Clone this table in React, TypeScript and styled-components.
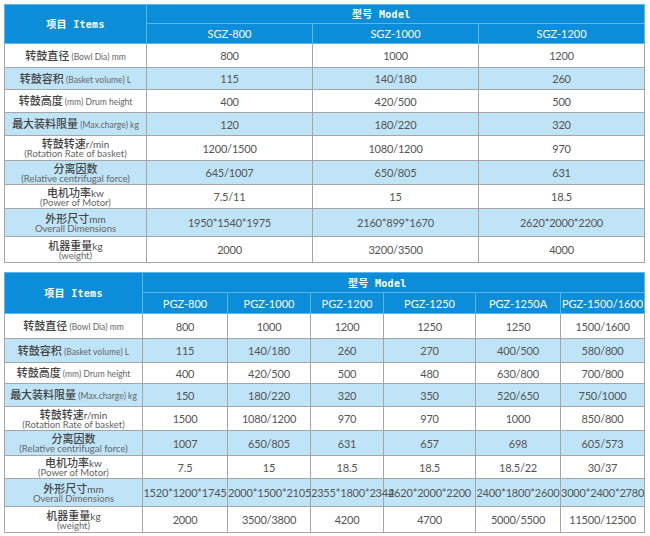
import React from "react";
import styled, { createGlobalStyle } from "styled-components";

const Global = createGlobalStyle`
  html, body { margin: 0; padding: 0; background: #fff; }
  body { font-family: "Lato", "Noto Sans CJK SC", sans-serif; }
`;

const Page = styled.div`
  padding: 4px 0 0 4px;
  display: flex;
  flex-direction: column;
  gap: 9px;
  width: 640px;
`;

const Table = styled.table`
  width: 640px;
  border-collapse: collapse;
  table-layout: fixed;
`;

const HeadCell = styled.th<{ $left?: boolean }>`
  background: #0b8dd9;
  color: #fff;
  font-weight: 400;
  font-size: 11px;
  font-family: "Lato", "Noto Sans CJK SC", sans-serif;
  border: 1px solid #5cb6ea;
  text-align: ${(p) => (p.$left ? "left" : "center")};
  padding: 0;
  padding-left: ${(p) => (p.$left ? "205px" : "0")};
  white-space: nowrap;
  overflow: visible;
  line-height: 1;
`;

const Mono = styled.span`
  font-family: "DejaVu Sans Mono", "Noto Sans CJK SC", monospace;
  font-weight: 700;
  font-size: 10px;
  letter-spacing: 0.3px;
`;

const Row = styled.tr<{ $alt: boolean; $h: number }>`
  height: ${(p) => p.$h}px;
  background: ${(p) => (p.$alt ? "#bfe4f8" : "#ffffff")};
`;

const Cell = styled.td`
  border: 1px solid #a5a5a5;
  text-align: center;
  color: #555;
  font-size: 11px;
  letter-spacing: -0.2px;
  padding: 0;
  white-space: nowrap;
  overflow: visible;
  line-height: 1;
`;

const LabelCell = styled(Cell)`
  letter-spacing: 0;
`;

const Line = styled.div`
  height: 12px;
  line-height: 12px;
`;

const Cn = styled.span`
  font-family: "Noto Sans CJK SC", sans-serif;
  font-weight: 500;
  font-size: 11px;
  color: #444;
`;

const Unit = styled.span`
  font-family: "Lato", sans-serif;
  font-size: 10px;
  color: #555;
`;

const Small = styled.span`
  font-family: "Lato", sans-serif;
  font-size: 8.5px;
  color: #666;
`;

const Sub = styled.div`
  font-family: "Lato", sans-serif;
  font-size: 9.5px;
  color: #666;
  height: 10px;
  line-height: 10px;
`;

type Label = { cn: string; unit?: string; inline?: string; sub?: string };

const labels: Label[] = [
  { cn: "转鼓直径", inline: " (Bowl Dia) mm" },
  { cn: "转鼓容积", inline: " (Basket volume) L" },
  { cn: "转鼓高度", inline: " (mm) Drum height" },
  { cn: "最大装料限量", inline: " (Max.charge) kg" },
  { cn: "转鼓转速", unit: "r/min", sub: "(Rotation Rate of basket)" },
  { cn: "分离因数", sub: "(Relative centrifugal force)" },
  { cn: "电机功率", unit: "kw", sub: "(Power of Motor)" },
  { cn: "外形尺寸", unit: "mm", sub: "Overall Dimensions" },
  { cn: "机器重量", unit: "kg", sub: "(weight)" },
];

const heights1 = [24, 22, 23, 23, 25, 24, 24, 28, 26];
const heights2 = [25, 24, 21, 23, 24, 25, 23, 28, 26];

const t1Models = ["SGZ-800", "SGZ-1000", "SGZ-1200"];
const t1Data = [
  ["800", "1000", "1200"],
  ["115", "140/180", "260"],
  ["400", "420/500", "500"],
  ["120", "180/220", "320"],
  ["1200/1500", "1080/1200", "970"],
  ["645/1007", "650/805", "631"],
  ["7.5/11", "15", "18.5"],
  ["1950*1540*1975", "2160*899*1670", "2620*2000*2200"],
  ["2000", "3200/3500", "4000"],
];

const t2Models = ["PGZ-800", "PGZ-1000", "PGZ-1200", "PGZ-1250", "PGZ-1250A", "PGZ-1500/1600"];
const t2Data = [
  ["800", "1000", "1200", "1250", "1250", "1500/1600"],
  ["115", "140/180", "260", "270", "400/500", "580/800"],
  ["400", "420/500", "500", "480", "630/800", "700/800"],
  ["150", "180/220", "320", "350", "520/650", "750/1000"],
  ["1500", "1080/1200", "970", "970", "1000", "850/800"],
  ["1007", "650/805", "631", "657", "698", "605/573"],
  ["7.5", "15", "18.5", "18.5", "18.5/22", "30/37"],
  ["1520*1200*1745", "2000*1500*2105", "2355*1800*2344", "2620*2000*2200", "2400*1800*2600", "3000*2400*2780"],
  ["2000", "3500/3800", "4200", "4700", "5000/5500", "11500/12500"],
];

function LabelContent({ l }: { l: Label }) {
  if (l.sub) {
    return (
      <>
        <Line>
          <Cn>{l.cn}</Cn>
          {l.unit && <Unit>{l.unit}</Unit>}
        </Line>
        <Sub>{l.sub}</Sub>
      </>
    );
  }
  return (
    <>
      <Cn>{l.cn}</Cn>
      <Small>{l.inline}</Small>
    </>
  );
}

function SpecTable({
  cols,
  models,
  data,
  heights,
  h1,
  h2,
}: {
  cols: number[];
  models: string[];
  data: string[][];
  heights: number[];
  h1: number;
  h2: number;
}) {
  return (
    <Table>
      <colgroup>
        {cols.map((w, i) => (
          <col key={i} style={{ width: w }} />
        ))}
      </colgroup>
      <thead>
        <tr style={{ height: h1 }}>
          <HeadCell rowSpan={2}>
            <Mono>项目 Items</Mono>
          </HeadCell>
          <HeadCell colSpan={models.length} $left>
            <Mono>型号 Model</Mono>
          </HeadCell>
        </tr>
        <tr style={{ height: h2 }}>
          {models.map((m) => (
            <HeadCell key={m}>{m}</HeadCell>
          ))}
        </tr>
      </thead>
      <tbody>
        {labels.map((l, i) => (
          <Row key={i} $alt={i % 2 === 1} $h={heights[i]}>
            <LabelCell>
              <LabelContent l={l} />
            </LabelCell>
            {data[i].map((v, j) => (
              <Cell key={j}>{v}</Cell>
            ))}
          </Row>
        ))}
      </tbody>
    </Table>
  );
}

export default function App() {
  return (
    <>
      <Global />
      <Page>
        <SpecTable
          cols={[142, 166, 166, 166]}
          models={t1Models}
          data={t1Data}
          heights={heights1}
          h1={19}
          h2={20}
        />
        <SpecTable
          cols={[138, 85, 83, 73, 92, 85, 84]}
          models={t2Models}
          data={t2Data}
          heights={heights2}
          h1={20}
          h2={21}
        />
      </Page>
    </>
  );
}
